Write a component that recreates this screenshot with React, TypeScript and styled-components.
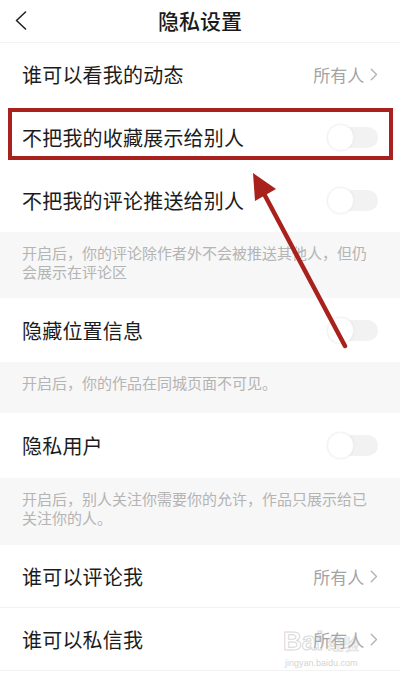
import React from "react";
import styled, { createGlobalStyle } from "styled-components";

const GlobalStyle = createGlobalStyle`
  html, body { margin: 0; padding: 0; background: #ffffff; }
  body { font-family: "Noto Sans CJK SC", "Noto Sans", sans-serif; }
  * { box-sizing: border-box; }
`;

const Page = styled.div`
  position: relative;
  width: 400px;
  height: 675px;
  overflow: hidden;
  background: #ffffff;
  display: flex;
  flex-direction: column;
`;

const Header = styled.header`
  height: 43px;
  flex: none;
  display: grid;
  grid-template-columns: 60px 1fr 60px;
  align-items: center;
  border-bottom: 1px solid #f3f3f3;
`;

const BackButton = styled.div`
  display: flex;
  align-items: center;
  padding-left: 15px;
  height: 100%;
  padding-bottom: 2px;
`;

const Title = styled.h1`
  margin: 0;
  text-align: center;
  font-size: 21px;
  font-weight: 500;
  color: #1a1a1a;
  padding-bottom: 3px;
`;

const Row = styled.div<{ $divider?: boolean; $h?: number }>`
  height: ${(p) => p.$h ?? 63}px;
  flex: none;
  display: flex;
  align-items: center;
  justify-content: space-between;
  padding: 0 22px;
  ${(p) => (p.$divider ? "border-bottom: 1px solid #f2f2f2;" : "")}
`;

const Label = styled.span`
  font-size: 20px;
  color: #1c1c1c;
  letter-spacing: 0.2px;
`;

const Value = styled.span`
  display: flex;
  align-items: center;
  gap: 6px;
  font-size: 17px;
  color: #a3a3a3;
`;

const Track = styled.div`
  position: relative;
  width: 51px;
  height: 21px;
  border-radius: 11px;
  background: #f2f2f2;
`;

const Knob = styled.div`
  position: absolute;
  left: 0;
  top: -3px;
  width: 27px;
  height: 27px;
  border-radius: 50%;
  background: #ffffff;
  box-shadow: 0 0 2px rgba(0, 0, 0, 0.08);
  border: 1px solid #f4f4f4;
`;

const Note = styled.div<{ $h: number }>`
  height: ${(p) => p.$h}px;
  flex: none;
  background: #f7f7f7;
  color: #b4b4b4;
  font-size: 15px;
  line-height: 19px;
  padding: 11px 22px 0 22px;
`;

const Highlight = styled.div`
  position: absolute;
  left: 8px;
  top: 108px;
  width: 385px;
  height: 52px;
  border: 4px solid #a8211d;
  pointer-events: none;
`;

const Annotation = styled.svg`
  position: absolute;
  left: 0;
  top: 0;
  pointer-events: none;
`;

const Watermark = styled.div`
  position: absolute;
  left: 283px;
  top: 628px;
  display: flex;
  flex-direction: column;
  align-items: flex-start;
  font-family: "Liberation Sans", sans-serif;
  pointer-events: none;
`;

const WmTop = styled.div`
  display: flex;
  align-items: baseline;
  font-size: 26px;
  font-weight: 700;
  line-height: 26px;
  color: transparent;
  -webkit-text-stroke: 1px rgba(190, 190, 190, 0.6);
`;

const WmCn = styled.span`
  font-family: "Noto Sans CJK SC", sans-serif;
  font-size: 16px;
  font-weight: 400;
  -webkit-text-stroke: 0.6px rgba(190, 190, 190, 0.6);
  margin-left: 4px;
`;

const WmUrl = styled.div`
  font-size: 9px;
  color: rgba(190, 190, 190, 0.7);
  margin-top: 2px;
  margin-left: 2px;
`;

const Chevron = ({ color, size = 12 }: { color: string; size?: number }) => (
  <svg width={size * 0.6} height={size} viewBox="0 0 6 10" fill="none">
    <path d="M1 1 L5 5 L1 9" stroke={color} strokeWidth="1" strokeLinecap="round" strokeLinejoin="round" />
  </svg>
);

const Toggle = () => (
  <Track>
    <Knob />
  </Track>
);

const AllValue = () => (
  <Value>
    所有人
    <Chevron color="#b0b0b0" size={13} />
  </Value>
);

export default function App() {
  return (
    <>
      <GlobalStyle />
      <Page>
        <Header>
          <BackButton>
            <svg width="12" height="19" viewBox="0 0 12 19" fill="none">
              <path d="M10.5 1 L1.5 9.5 L10.5 18" stroke="#222" strokeWidth="1.6" strokeLinecap="round" strokeLinejoin="round" />
            </svg>
          </BackButton>
          <Title>隐私设置</Title>
          <div />
        </Header>

        <Row>
          <Label>谁可以看我的动态</Label>
          <AllValue />
        </Row>
        <Row>
          <Label>不把我的收藏展示给别人</Label>
          <Toggle />
        </Row>
        <Row>
          <Label>不把我的评论推送给别人</Label>
          <Toggle />
        </Row>
        <Note $h={66}>开启后，你的评论除作者外不会被推送其他人，但仍会展示在评论区</Note>
        <Row $h={64}>
          <Label>隐藏位置信息</Label>
          <Toggle />
        </Row>
        <Note $h={51}>开启后，你的作品在同城页面不可见。</Note>
        <Row $h={65}>
          <Label>隐私用户</Label>
          <Toggle />
        </Row>
        <Note $h={67}>开启后，别人关注你需要你的允许，作品只展示给已关注你的人。</Note>
        <Row $divider>
          <Label>谁可以评论我</Label>
          <AllValue />
        </Row>
        <Row $divider>
          <Label>谁可以私信我</Label>
          <AllValue />
        </Row>

        <Highlight />
        <Annotation width="400" height="675" viewBox="0 0 400 675">
          <line x1="345" y1="346" x2="262" y2="190" stroke="#a8211d" strokeWidth="4.5" strokeLinecap="round" />
          <polygon points="253,173 276,189 255,201" fill="#a8211d" />
        </Annotation>
        <Watermark>
          <WmTop>
            Bai<WmCn>经验</WmCn>
          </WmTop>
          <WmUrl>jingyan.baidu.com</WmUrl>
        </Watermark>
      </Page>
    </>
  );
}
